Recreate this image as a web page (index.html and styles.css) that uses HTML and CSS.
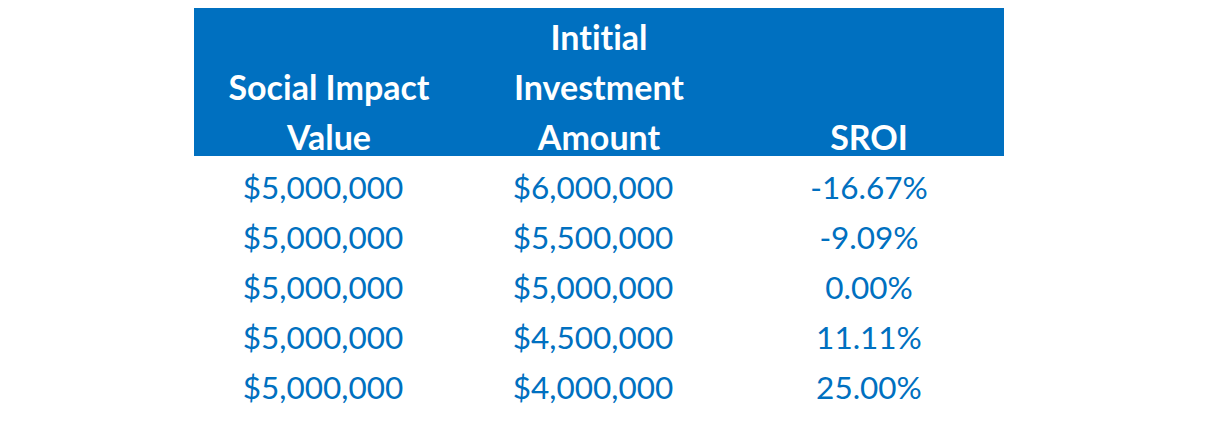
FILE: index.html
```html
<!DOCTYPE html>
<html>
<head>
<meta charset="utf-8">
<link rel="stylesheet" href="styles.css">
</head>
<body>
<div class="table">
  <div class="head">
    <div class="hcell">Social Impact<br>Value</div>
    <div class="hcell">Intitial<br>Investment<br>Amount</div>
    <div class="hcell">SROI</div>
  </div>
  <div class="row"><div class="cell money">$5,000,000</div><div class="cell money">$6,000,000</div><div class="cell">-16.67%</div></div>
  <div class="row"><div class="cell money">$5,000,000</div><div class="cell money">$5,500,000</div><div class="cell">-9.09%</div></div>
  <div class="row"><div class="cell money">$5,000,000</div><div class="cell money">$5,000,000</div><div class="cell">0.00%</div></div>
  <div class="row"><div class="cell money">$5,000,000</div><div class="cell money">$4,500,000</div><div class="cell">11.11%</div></div>
  <div class="row"><div class="cell money">$5,000,000</div><div class="cell money">$4,000,000</div><div class="cell">25.00%</div></div>
</div>
</body>
</html>
```
FILE: styles.css
```css
html, body {
  margin: 0;
  padding: 0;
  background: #ffffff;
}
body {
  font-family: "Lato", "Open Sans", sans-serif;
  font-variant-ligatures: none;
  line-height: 50px;
}
.table {
  width: 810px;
  margin: 8px 0 0 194px;
}
.head {
  display: grid;
  grid-template-columns: 270px 270px 270px;
  padding: 4px 0 0;
  background: linear-gradient(#0070c0, #0070c0) top left / 100% 148px no-repeat;
}
.hcell {
  align-self: end;
  text-align: center;
  color: #ffffff;
  font-weight: 700;
  font-size: 34px;
}
.row {
  display: grid;
  grid-template-columns: 270px 270px 270px;
  font-size: 31.5px;
}
.cell {
  text-align: center;
  color: #0070c0;
}
.money {
  padding-right: 12px;
}
```
